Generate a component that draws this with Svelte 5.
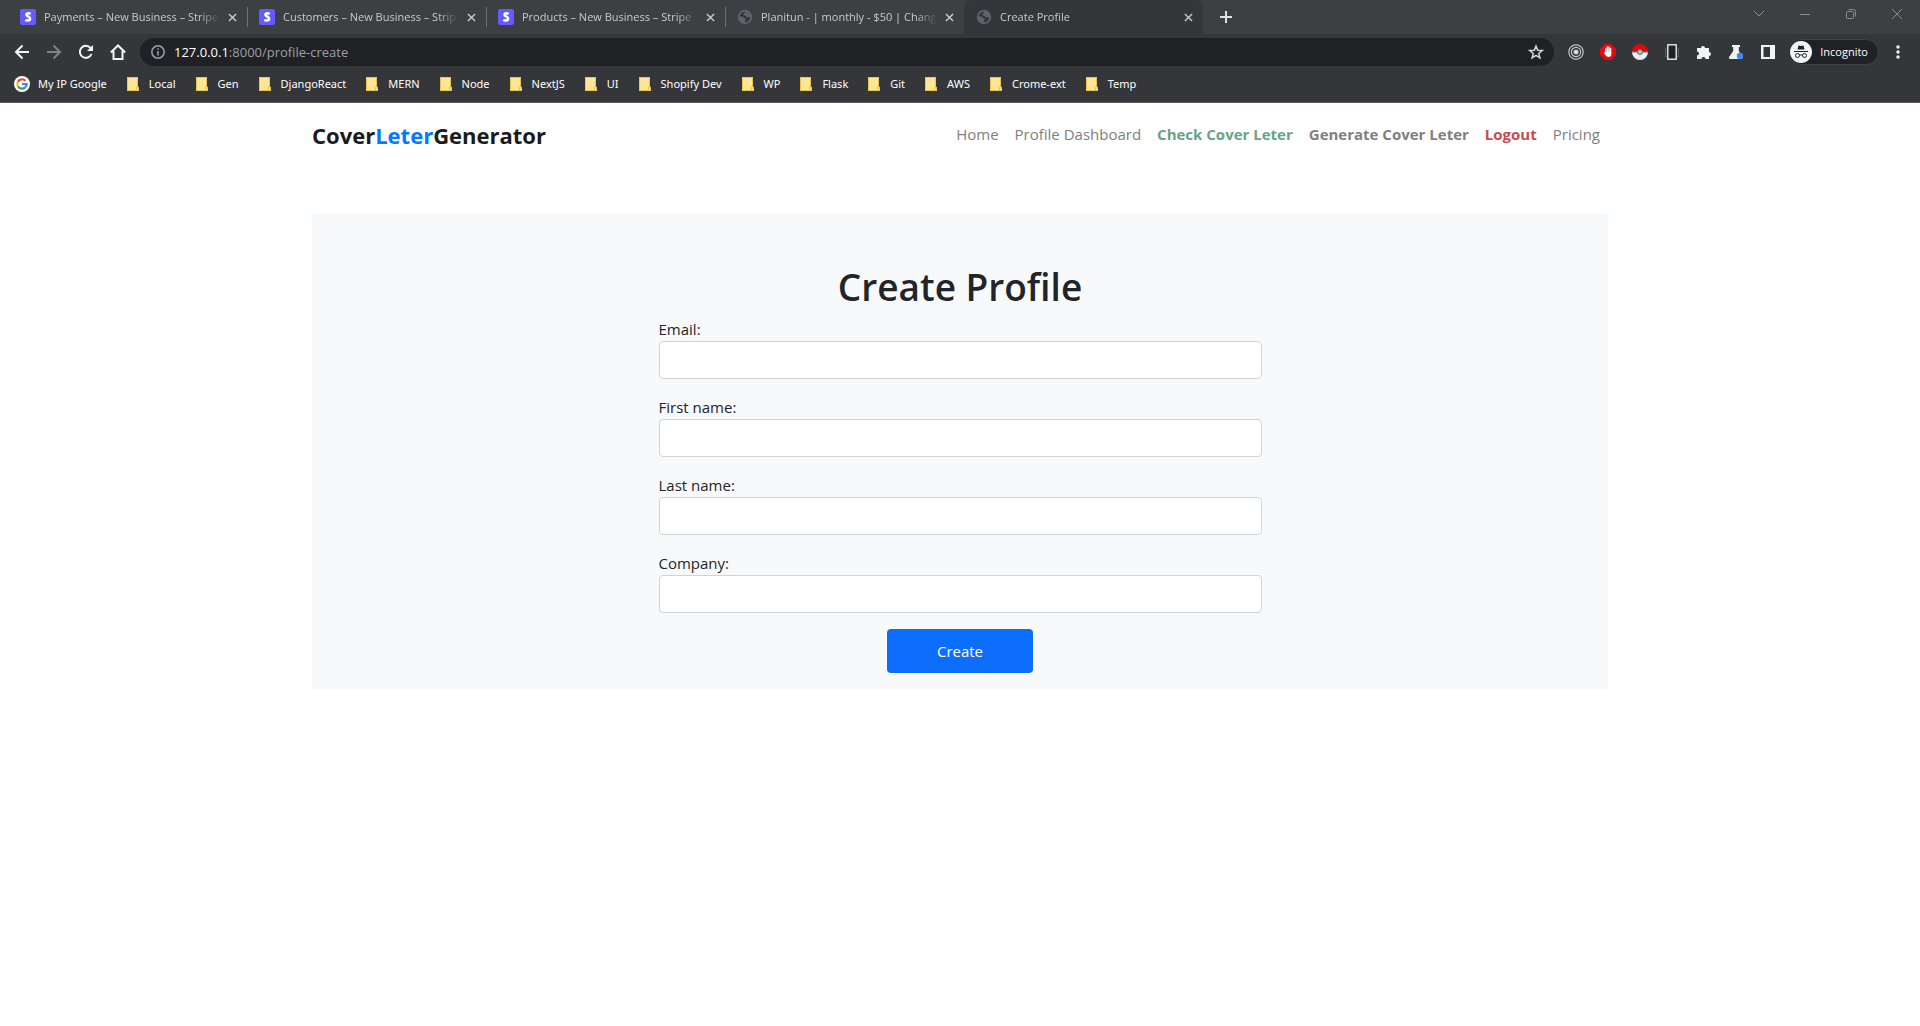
<script>
  const tabs = [
    { title: 'Payments – New Business – Stripe', kind: 'stripe' },
    { title: 'Customers – New Business – Strip', kind: 'stripe' },
    { title: 'Products – New Business – Stripe', kind: 'stripe' },
    { title: 'Planitun - | monthly - $50 | Chang', kind: 'globe' },
    { title: 'Create Profile', kind: 'globe', active: true }
  ];
  const folders = ['Local', 'Gen', 'DjangoReact', 'MERN', 'Node', 'NextJS', 'UI', 'Shopify Dev', 'WP', 'Flask', 'Git', 'AWS', 'Crome-ext', 'Temp'];
  const links = [
    { text: 'Home' },
    { text: 'Profile Dashboard' },
    { text: 'Check Cover Leter', tone: 'green' },
    { text: 'Generate Cover Leter', tone: 'strong' },
    { text: 'Logout', tone: 'red' },
    { text: 'Pricing' }
  ];
  const fields = [
    { id: 'email', label: 'Email:', type: 'email' },
    { id: 'first-name', label: 'First name:', type: 'text' },
    { id: 'last-name', label: 'Last name:', type: 'text' },
    { id: 'company', label: 'Company:', type: 'text' }
  ];
</script>

<div class="browser">
  <div class="strip">
    {#each tabs as tab}
      <div class="tab" class:active={tab.active}>
        {#if tab.kind === 'stripe'}
          <svg class="fav" viewBox="0 0 16 16"><rect width="16" height="16" rx="2" fill="#635bff" /><path d="M10.700 4.800C9.900 4.400 9.100 4.200 8.300 4.200 7.200 4.200 6.500 4.700 6.500 5.700c0 2.200 3.600 1.700 3.600 3.900 0 1.300-1 2-2.500 2-.9 0-1.700-.2-2.400-.6" fill="none" stroke="#fff" stroke-width="2.500" /></svg>
        {:else}
          <svg class="fav" viewBox="0 0 16 16"><circle cx="8" cy="8" r="7.200" fill="#5f6368" /><path d="M2.800 7.600C2.800 5 5 2.800 8.200 2.800c.3 1.300-1.500 1.200-1.700 2.500-.2 1 .6 1.400 1.700 1.500 1.300.1 1 1.600 2.300 1.700 1 .1 1.700-.5 2.700-.6 0 2.900-2.200 5.300-5.100 5.300-.9-.4-.1-1.400.4-1.900.7-.8.2-1.700-.7-1.900-1.400-.3-1.300-1.800-2.700-1.900z" fill="#35363a" /></svg>
        {/if}
        <span class="title">{tab.title}</span>
        <button class="x" aria-label="Close tab"><svg viewBox="0 0 10 10"><path d="M1 1l8 8M9 1L1 9" /></svg></button>
      </div>
    {/each}
    <button class="plus" aria-label="New tab"><svg viewBox="0 0 12 12"><path d="M6 0v12M0 6h12" /></svg></button>
    <div class="window">
      <button aria-label="Search tabs"><svg viewBox="0 0 12 12"><path d="M1 3l5 5 5-5" /></svg></button>
      <button aria-label="Minimize"><svg viewBox="0 0 12 12"><path d="M1 6.500h10" /></svg></button>
      <button aria-label="Restore"><svg viewBox="0 0 12 12"><rect x="1.500" y="3.500" width="7" height="7" rx="1" /><path d="M3.500 1.500h5a2 2 0 0 1 2 2v5" /></svg></button>
      <button aria-label="Close"><svg viewBox="0 0 12 12"><path d="M1 1l10 10M11 1L1 11" /></svg></button>
    </div>
  </div>

  <div class="toolbar">
    <button class="tool" aria-label="Back"><svg viewBox="0 0 16 16"><path d="M15 8H2M8.500 1.500L2 8l6.500 6.500" /></svg></button>
    <button class="tool dim" aria-label="Forward"><svg viewBox="0 0 16 16"><path d="M1 8h13M7.500 1.500L14 8l-6.500 6.500" /></svg></button>
    <button class="tool" aria-label="Reload"><svg viewBox="0 0 16 16"><path d="M13.500 10A6 6 0 1 1 12.500 4" /><path class="solid" d="M15 1v6H9z" /></svg></button>
    <button class="tool" aria-label="Home"><svg viewBox="0 0 16 16"><path d="M0.800 8.500L8 1.500l7.200 7M3.500 7v8h9V7" /></svg></button>
    <div class="omnibox">
      <svg class="info" viewBox="0 0 16 16"><circle cx="8" cy="8" r="6.200" /><path d="M8 7v4.500M8 4.300v1.500" /></svg>
      <span class="url"><b>127.0.0.1</b>:8000/profile-create</span>
      <button class="star" aria-label="Bookmark this page"><svg viewBox="0 0 16 16"><path d="M8 2l1.700 4.200 4.500.3-3.500 2.900 1.200 4.400L8 11.300l-3.900 2.500 1.200-4.400-3.500-2.900 4.500-.3z" /></svg></button>
    </div>
    <div class="extensions">
      <button aria-label="Target"><svg viewBox="0 0 16 16" fill="none" stroke="#c4c5c7" stroke-width="1.200"><circle cx="8" cy="8" r="7.200" /><circle cx="8" cy="8" r="4.600" /><circle cx="8" cy="8" r="2" fill="#e8eaed" /></svg></button>
      <button aria-label="Blocker"><svg viewBox="0 0 16 16"><path d="M5 0h6l5 5v6l-5 5H5l-5-5V5z" fill="#e30b13" /><path d="M5.800 4.500v5M7.400 3v6M9 3v6M10.600 4.500V9" stroke="#fff" stroke-width="1.400" stroke-linecap="round" /><path d="M5.100 8h6.200v2c0 2-1.100 3-2.800 3C6.500 13 4 10 4 8.500z" fill="#fff" /></svg></button>
      <button aria-label="Ball"><svg viewBox="0 0 16 16"><path d="M0 8a8 8 0 0 1 16 0z" fill="#dd0c0c" /><path d="M0 8a8 8 0 0 0 16 0z" fill="#e9f1f1" /><path d="M0 8h16" stroke="#777" /><circle cx="8" cy="8" r="2.500" fill="#b9c0c4" stroke="#666" /></svg></button>
      <button aria-label="Device"><svg viewBox="0 0 16 16"><rect x="1.500" y="4.500" width="13" height="8" fill="none" stroke="#55575b" /><rect x="3.800" y=".8" width="8.400" height="14.400" fill="#202124" stroke="#e8eaed" stroke-width="1.400" /></svg></button>
      <button aria-label="Extensions"><svg viewBox="0 0 16 16"><path d="M1 4h4a2 2 0 1 1 4 0h4v4a2 2 0 1 1 0 4v3H9.500a2 2 0 1 0-4 0H1v-3.500a2 2 0 1 0 0-4z" fill="#f1f3f4" /></svg></button>
      <button aria-label="Labs"><svg viewBox="0 0 16 16"><path d="M4 1h8v2h-1.200v4l4 6.500-1 1.500H1.500l-.7-1.500L5.200 7V3H4z" fill="#f1f3f4" /><circle cx="12" cy="12" r="3.200" fill="#4285f4" /></svg></button>
      <button aria-label="Side panel"><svg viewBox="0 0 16 16"><path d="M1 1h14v14H1zM3.500 3v10H10V3z" fill="#f1f3f4" fill-rule="evenodd" /></svg></button>
    </div>
    <button class="incognito">
      <svg viewBox="0 0 22 22"><circle cx="11" cy="11" r="11" fill="#f1f3f4" /><path d="M7.500 8.500l1-4 2.500.6 2.500-.6 1 4z" fill="#202124" /><path d="M4 10.500h14" stroke="#202124" /><g fill="none" stroke="#202124"><rect x="5.500" y="12.500" width="4" height="4" rx="2" /><rect x="12.500" y="12.500" width="4" height="4" rx="2" /><path d="M9.500 14h3" /></g></svg>
      Incognito
    </button>
    <button class="menu" aria-label="Menu"><svg viewBox="0 0 4 16"><circle cx="2" cy="3" r="1.700" /><circle cx="2" cy="8" r="1.700" /><circle cx="2" cy="13" r="1.700" /></svg></button>
  </div>

  <div class="bookmarks">
    <a href="#google"><svg class="g" viewBox="0 0 16 16"><circle cx="8" cy="8" r="8" fill="#fff" /><g fill="none" stroke-width="2.200"><path d="M3.900 5.700A4.700 4.700 0 0 1 11.400 4.700" stroke="#ea4335" /><path d="M3.900 10.300a4.700 4.700 0 0 1 0-4.600" stroke="#fbbc05" /><path d="M11.200 11.400a4.700 4.700 0 0 1-7.300-1.100" stroke="#34a853" /><path d="M8 8h4.700a4.700 4.700 0 0 1-1.500 3.400" stroke="#4285f4" /></g></svg><span>My IP Google</span></a>
    {#each folders as name}
      <button><svg class="folder" viewBox="0 0 12 14"><path d="M0 0h11v10h1v4H0z" fill="#ffe694" /><path d="M.5.5h10V10M.5.5v13h11V10h-2v3.500" fill="none" stroke="#e8c54f" /></svg>{name}</button>
    {/each}
  </div>
</div>

<header class="container">
  <a class="brand" href="#home">Cover<span>Leter</span>Generator</a>
  <nav>
    {#each links as link}
      <a href="#{link.text}" class={link.tone}>{link.text}</a>
    {/each}
  </nav>
</header>

<main class="container">
  <form class="panel">
    <h1>Create Profile</h1>
    <div class="fields">
      {#each fields as field}
        <div class="field">
          <label for={field.id}>{field.label}</label>
          <input id={field.id} type={field.type} />
        </div>
      {/each}
    </div>
    <button class="submit" type="button">Create</button>
  </form>
</main>

<style>
  :global(body) {
    background: #fff;
    color: #212529;
    font: 15px/24px "Open Sans", "Noto Sans", sans-serif;
  }
  :global(*) { box-sizing: border-box; }
  button { font: inherit; color: inherit; background: none; border: 0; padding: 0; }
  a { color: inherit; text-decoration: none; }
  svg { display: block; flex: none; }

  .browser {
    background: #35363a;
    border-bottom: 1px solid #5d5e62;
    color: #fff;
    font-size: 11px;
    line-height: 16px;
  }
  .strip { display: flex; height: 34px; padding-left: 8px; background: #3c4043; color: #c8cacd; }
  .tab {
    position: relative;
    display: flex;
    align-items: center;
    width: 239px;
    padding: 0 10px 0 12px;
  }
  .tab:not(.active)::after {
    content: "";
    position: absolute;
    right: -1px;
    top: 7px;
    width: 1px;
    height: 20px;
    background: #6e7275;
  }
  .tab:nth-child(4)::after { display: none; }
  .active { background: #35363a; border-radius: 8px 8px 0 0; }
  .fav { width: 16px; height: 16px; margin-right: 8px; }
  .title {
    flex: 1;
    overflow: hidden;
    white-space: nowrap;
    mask-image: linear-gradient(to right, #000 88%, transparent);
  }
  .x { margin-left: 8px; }
  .x svg { width: 9px; height: 9px; stroke: #c8cacd; stroke-width: 1.600; }
  .plus { padding: 0 16px 0 17px; }
  .plus svg { width: 12px; height: 12px; stroke: #dfe1e5; stroke-width: 2; }
  .window { display: flex; margin-left: auto; height: 28px; }
  .window button { display: grid; place-items: center; width: 46px; }
  .window svg { width: 12px; height: 12px; fill: none; stroke: #8b8e91; }

  .toolbar { display: flex; align-items: center; height: 36px; padding: 0 20px 0 6px; }
  .tool { display: grid; place-items: center; width: 32px; height: 28px; }
  .tool svg { width: 16px; height: 16px; fill: none; stroke: #f1f3f4; stroke-width: 2; }
  .tool.dim svg { stroke: #808285; }
  .tool .solid { fill: #f1f3f4; stroke: none; }
  .omnibox {
    flex: 1;
    display: flex;
    align-items: center;
    height: 28px;
    margin-left: 6px;
    padding: 0 10px;
    border-radius: 14px;
    background: #202124;
  }
  .info { width: 16px; height: 16px; margin-right: 8px; fill: none; stroke: #9aa0a6; stroke-width: 1.500; }
  .url { flex: 1; font-size: 13px; color: #9aa0a6; }
  .url b { font-weight: 400; color: #fff; }
  .star svg { width: 16px; height: 16px; fill: none; stroke: #d5d7da; stroke-width: 1.500; }
  .extensions { display: flex; margin: 0 4px 0 6px; }
  .extensions button { display: grid; place-items: center; width: 32px; }
  .extensions svg { width: 16px; height: 16px; }
  .incognito {
    display: flex;
    align-items: center;
    gap: 8px;
    height: 26px;
    padding: 0 10px 0 1px;
    border: 1px solid #404246;
    border-radius: 13px;
    background: #202124;
  }
  .incognito svg { width: 22px; height: 22px; }
  .menu { margin-left: 17px; }
  .menu svg { width: 4px; height: 16px; fill: #f1f3f4; }

  .bookmarks { display: flex; gap: 20px; height: 32px; padding: 6px 14px 10px; font-family: "Noto Sans", sans-serif; }
  .bookmarks a, .bookmarks button { display: flex; align-items: center; white-space: nowrap; }
  .g { width: 16px; height: 16px; margin-right: 8px; }
  .folder { width: 12px; height: 14px; margin-right: 10px; }

  .container { width: 100%; max-width: 1320px; margin: 0 auto; padding: 0 12px; }
  header { display: flex; align-items: center; justify-content: space-between; height: 62px; }
  .brand { padding-top: 2px; font-size: 22px; line-height: 36px; font-weight: 700; color: #1b1b1b; }
  .brand span { color: #007bff; }
  nav { display: flex; }
  nav a { padding: 8px; color: #808080; }
  nav .green { color: #66a583; font-weight: 700; }
  nav .strong { font-weight: 700; }
  nav .red { color: #c84b4f; font-weight: 700; }

  .panel {
    display: flex;
    flex-direction: column;
    align-items: center;
    margin-top: 48px;
    padding: 50px 24px 16px;
    background: #f8f9fb;
  }
  h1 { margin: 0 0 6px; font-size: 37px; line-height: 48px; font-weight: 600; }
  .fields { display: grid; gap: 16px; width: 100%; max-width: 603px; margin-bottom: 16px; }
  .field { display: flex; flex-direction: column; }
  input { width: 100%; height: 38px; padding: 6px 12px; border: 1px solid #ced4da; border-radius: 4px; background: #fff; font: inherit; }
  .submit { height: 44px; padding: 0 50px; border-radius: 4px; background: #0d6efd; color: #fff; }
</style>
